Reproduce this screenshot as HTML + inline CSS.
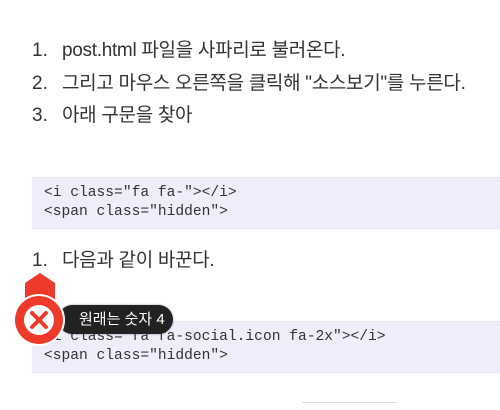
<!DOCTYPE html>
<html><head><meta charset="utf-8"><style>
body{margin:0;width:500px;height:410px;background:#fff;position:relative;overflow:hidden;font-family:"Liberation Sans","Noto Sans CJK KR",sans-serif;color:#333}
.li{position:absolute;left:32px;font-size:19px;line-height:24px}
.li span{position:absolute;left:30px;white-space:nowrap;letter-spacing:-0.3px}
.code{position:absolute;left:32px;width:470px;background:#eeeefb;border-top:1px solid #e4e4f0;border-bottom:1px solid #e4e4f0;font-family:"Liberation Mono",monospace;font-size:14.6px;line-height:19px;color:#333;padding-left:12px;box-sizing:border-box;white-space:pre}
</style></head><body>
<div class="li" style="top:39px">1.<span>post.html 파일을 사파리로 불러온다.</span></div>
<div class="li" style="top:72px">2.<span>그리고 마우스 오른쪽을 클릭해 "소스보기"를 누른다.</span></div>
<div class="li" style="top:104px">3.<span>아래 구문을 찾아</span></div>
<div class="code" style="top:177px;height:52px;padding-top:6px">&lt;i class="fa fa-"&gt;&lt;/i&gt;
&lt;span class="hidden"&gt;</div>
<div class="li" style="top:249px">1.<span>다음과 같이 바꾼다.</span></div>
<div class="code" style="top:321px;height:52px;padding-top:6px">&lt;i class="fa fa-social.icon fa-2x"&gt;&lt;/i&gt;
&lt;span class="hidden"&gt;</div>
<div style="position:absolute;left:302px;top:402px;width:95px;height:1px;background:#ddd"></div>
<div style="position:absolute;left:58px;top:305px;width:115px;height:29px;background:#222;border-radius:15px;color:#fff;font-size:15px;line-height:29px;padding-left:21px;box-sizing:border-box;box-shadow:0 0 2px rgba(0,0,0,.4)">원래는 숫자 4</div>
<svg style="position:absolute;left:0;top:265px" width="80" height="100">
<polygon points="25,18 40,8 55,18 55,40 25,40" fill="#ee3a2a"/>
<circle cx="39" cy="55" r="26" fill="#fff"/>
<circle cx="39" cy="55" r="24" fill="#ee3a2a"/>
<circle cx="39" cy="55" r="15" fill="#fff"/>
<path d="M32 48L46 62M46 48L32 62" stroke="#ee3a2a" stroke-width="4" stroke-linecap="round"/>
</svg>
</body></html>
